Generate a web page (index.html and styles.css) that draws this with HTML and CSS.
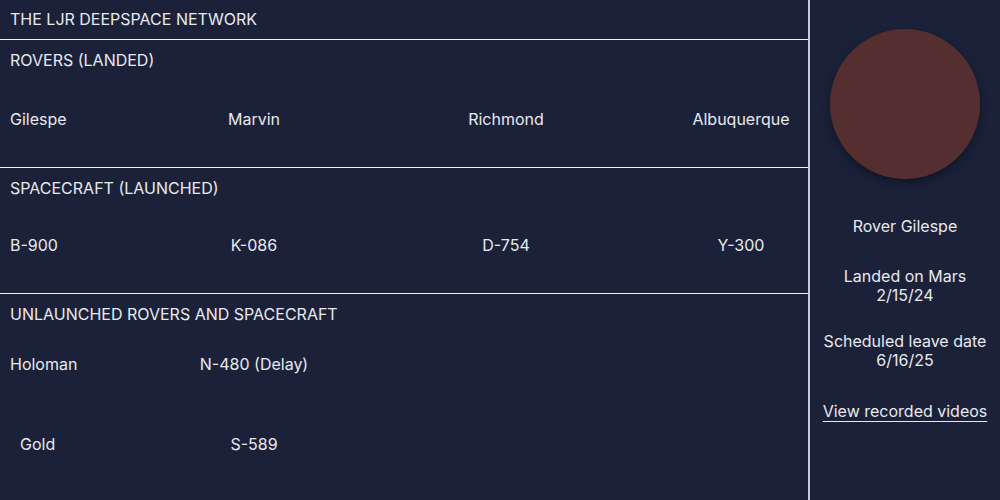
FILE: index.html
```html
<!DOCTYPE html>
<html lang="en">
<head>
<meta charset="utf-8">
<title>The LJR Deepspace Network</title>
<link rel="stylesheet" href="styles.css">
</head>
<body>
<div class="page">
  <main class="main">
    <header class="header">THE LJR DEEPSPACE NETWORK</header>
    <section class="section section-rovers">
      <h2 class="section-title">ROVERS (LANDED)</h2>
      <div class="row row-rovers">
        <span class="cell c1">Gilespe</span>
        <span class="cell c2">Marvin</span>
        <span class="cell c3">Richmond</span>
        <span class="cell c4">Albuquerque</span>
      </div>
    </section>
    <section class="section section-craft">
      <h2 class="section-title">SPACECRAFT (LAUNCHED)</h2>
      <div class="row row-craft">
        <span class="cell c1">B-900</span>
        <span class="cell c2">K-086</span>
        <span class="cell c3">D-754</span>
        <span class="cell c4">Y-300</span>
      </div>
    </section>
    <section class="section section-unlaunched">
      <h2 class="section-title">UNLAUNCHED ROVERS AND SPACECRAFT</h2>
      <div class="row row-un1">
        <span class="cell c1">Holoman</span>
        <span class="cell c2">N-480 (Delay)</span>
      </div>
      <div class="row row-un2">
        <span class="cell c1 indent">Gold</span>
        <span class="cell c2">S-589</span>
      </div>
    </section>
  </main>
  <aside class="sidebar">
    <div class="planet"></div>
    <p class="info info-name">Rover Gilespe</p>
    <p class="info info-landed">Landed on Mars<br>2/15/24</p>
    <p class="info info-leave">Scheduled leave date<br>6/16/25</p>
    <a class="info link" href="#">View recorded videos</a>
  </aside>
</div>
</body>
</html>
```
FILE: styles.css
```css
html, body {
  margin: 0;
  padding: 0;
  background: #1b2139;
}
body {
  font-family: Inter, "Noto Sans", sans-serif;
  font-size: 16px;
  line-height: 20px;
  color: #e8e9ee;
}
.page {
  display: flex;
  width: 1000px;
  height: 500px;
  overflow: hidden;
}
.main {
  width: 808px;
  flex: none;
  display: flex;
  flex-direction: column;
}
.header {
  padding: 9px 10px 10px;
  border-bottom: 1px solid #f2f2f4;
}
.section {
  padding: 10px 10px 0;
  border-bottom: 1px solid #f2f2f4;
}
.section-rovers { height: 117px; }
.section-craft { height: 115px; }
.section-unlaunched { flex: 1; border-bottom: none; }
.section-title {
  margin: 0;
  font-size: 16px;
  font-weight: 400;
  line-height: 20px;
}
.row {
  display: flex;
}
.row-rovers { margin-top: 39px; }
.row-craft { margin-top: 37px; }
.row-un1 { margin-top: 30px; }
.row-un2 { margin-top: 60px; }
.cell { display: block; flex: none; }
.c1 { width: 169px; text-align: left; }
.c2 { width: 150px; text-align: center; }
.c3 { width: 354px; text-align: center; }
.c4 { width: 116px; text-align: center; }
.indent { padding-left: 10px; box-sizing: border-box; }
.sidebar {
  flex: 1;
  border-left: 2px solid #c9ccd6;
  display: flex;
  flex-direction: column;
  align-items: center;
  text-align: center;
}
.planet {
  width: 150px;
  height: 150px;
  border-radius: 50%;
  background: #552f2f;
  margin-top: 29px;
  box-shadow: 0 4px 8px rgba(8, 12, 26, 0.55);
}
.info {
  margin: 0;
  line-height: 19px;
}
.info-name { margin-top: 38px; }
.info-landed { margin-top: 31px; }
.info-leave { margin-top: 27px; }
.link {
  margin-top: 32px;
  color: #e8e9ee;
  text-decoration: underline;
  text-underline-offset: 4px;
}
```
